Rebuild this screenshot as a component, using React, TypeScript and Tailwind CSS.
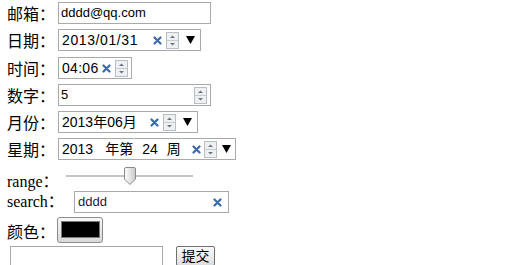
import React from 'react';

const cjk = "font-['Noto_Sans_CJK_SC',sans-serif]";
const field = "font-['Liberation_Sans','Noto_Sans_CJK_SC',sans-serif]";
const latinLabel = "font-['Liberation_Serif','Noto_Sans_CJK_SC',serif]";

const ClearX = () => (
  <svg width="9" height="9" viewBox="0 0 9 9" className="shrink-0">
    <path d="M1.5 1.5 L7.5 7.5 M7.5 1.5 L1.5 7.5" stroke="#3a6aa8" strokeWidth="2.2" strokeLinecap="round" />
  </svg>
);

const Spin = () => (
  <svg width="13" height="17" viewBox="0 0 13 17" className="shrink-0">
    <rect x="0.5" y="0.5" width="12" height="16" fill="#eef0f2" stroke="#b9bec4" />
    <line x1="1" y1="8.5" x2="12" y2="8.5" stroke="#c8ccd0" />
    <path d="M4 6 L6.5 3.5 L9 6 Z" fill="#6b7785" />
    <path d="M4 11 L6.5 13.5 L9 11 Z" fill="#6b7785" />
  </svg>
);

const Drop = () => (
  <svg width="9" height="8" viewBox="0 0 9 8" className="shrink-0">
    <path d="M0 0 H9 L4.5 8 Z" fill="#000" />
  </svg>
);

// trailing controls of the date-like inputs
const DateTail = ({ tight = false }: { tight?: boolean }) => (
  <div className="flex items-center">
    <ClearX />
    <div className={tight ? 'ml-[3px]' : 'ml-[4px]'}><Spin /></div>
    <div className={tight ? 'ml-[5px]' : 'ml-[7px]'}><Drop /></div>
  </div>
);

const Label = ({ children, w = 'w-[51px]' }: { children: React.ReactNode; w?: string }) => (
  <span className={`${cjk} ${w} text-[16px] leading-[22px] text-black shrink-0`}>{children}</span>
);

const App: React.FC = () => {
  return (
    <div className="w-[511px] h-[265px] overflow-hidden bg-white pl-[7px] pt-[2px]">
      {/* 邮箱 */}
      <div className="flex items-center h-[22px]">
        <Label>邮箱：</Label>
        <div className={`${field} w-[153px] h-[22px] border border-[#a9a9a9] pl-[2px] text-[13px] leading-[20px] text-black`}>
          dddd@qq.com
        </div>
      </div>

      {/* 日期 */}
      <div className="flex items-center h-[22px] mt-[5px]">
        <Label>日期：</Label>
        <div className={`${field} w-[143px] h-[22px] border border-[#a9a9a9] pl-[3px] pr-[5px] flex items-center text-[14px] text-black`}>
          <span className="flex-1 tracking-[0.6px]">2013/01/31</span>
          <DateTail />
        </div>
      </div>

      {/* 时间 */}
      <div className="flex items-center h-[22px] mt-[6px]">
        <Label>时间：</Label>
        <div className={`${field} w-[74px] h-[22px] border border-[#a9a9a9] pl-[3px] pr-[3px] flex items-center text-[14px] text-black`}>
          <span className="flex-1 tracking-[0.3px]">04:06</span>
          <ClearX />
          <div className="ml-[4px]"><Spin /></div>
        </div>
      </div>

      {/* 数字 */}
      <div className="flex items-center h-[22px] mt-[5px]">
        <Label>数字：</Label>
        <div className={`${field} w-[153px] h-[22px] border border-[#a9a9a9] pl-[2px] pr-[3px] flex items-center text-[13px] text-black`}>
          <span className="flex-1">5</span>
          <Spin />
        </div>
      </div>

      {/* 月份 */}
      <div className="flex items-center h-[22px] mt-[5px]">
        <Label>月份：</Label>
        <div className={`${field} w-[140px] h-[22px] border border-[#a9a9a9] pl-[3px] pr-[5px] flex items-center text-[14px] text-black`}>
          <span className="flex-1">2013年06月</span>
          <DateTail />
        </div>
      </div>

      {/* 星期 */}
      <div className="flex items-center h-[22px] mt-[5px]">
        <Label>星期：</Label>
        <div className={`${field} w-[178px] h-[22px] border border-[#a9a9a9] pl-[3px] pr-[4px] flex items-center text-[14px] text-black`}>
          <span className="flex-1 whitespace-nowrap">
            2013<span className="ml-[12px]">年第</span><span className="ml-[9px]">24</span><span className="ml-[9px]">周</span>
          </span>
          <DateTail tight />
        </div>
      </div>

      {/* range */}
      <div className="flex items-end h-[27px] mt-[3px]">
        <span className={`${latinLabel} w-[55px] text-[16px] leading-[16px] text-black shrink-0`}>range：</span>
        <div className="self-start mt-[4px] relative w-[135px] h-[18px] flex items-center">
          <div className="mx-[4px] flex-1 h-[2px] bg-[#c4c4c4]" />
          <svg width="12" height="18" viewBox="0 0 12 18" className="absolute left-[62px] top-0">
            <defs>
              <linearGradient id="thumb" x1="0" y1="0" x2="1" y2="0">
                <stop offset="0" stopColor="#ffffff" />
                <stop offset="1" stopColor="#c9c9c9" />
              </linearGradient>
            </defs>
            <path d="M2 0.5 H10 Q11.5 0.5 11.5 2 V12 L6 17.5 L0.5 12 V2 Q0.5 0.5 2 0.5 Z" fill="url(#thumb)" stroke="#8a8a8a" />
          </svg>
        </div>
      </div>

      {/* search */}
      <div className="flex items-center h-[22px] mt-[1px]">
        <span className={`${latinLabel} w-[67px] text-[16px] leading-[22px] text-black shrink-0`}>search：</span>
        <div className={`${field} w-[155px] h-[22px] border border-[#a9a9a9] pl-[3px] pr-[6px] flex items-center text-[13px] text-[#1c1c3c]`}>
          <span className="flex-1">dddd</span>
          <ClearX />
        </div>
      </div>

      {/* 颜色 */}
      <div className="flex items-center h-[26px] mt-[4px]">
        <span className={`${cjk} w-[50px] text-[16px] leading-[22px] text-black shrink-0 mt-[2px]`}>颜色：</span>
        <div className="w-[46px] h-[26px] rounded-[3px] border border-[#8c8c8c] bg-gradient-to-b from-[#f7f7f7] to-[#d9d9d9] pl-[3px] pr-[2px] pt-[3px] pb-[4px]">
          <div className="w-full h-full bg-black border border-[#7a7a7a]" />
        </div>
      </div>

      {/* textarea + 提交 */}
      <div className="flex items-start mt-[3px] pl-[3px]">
        <div className="w-[153px] h-[36px] border border-[#a9a9a9] bg-white" />
        <div className={`${cjk} ml-[13px] w-[39px] h-[20px] rounded-[2px] border border-[#707070] bg-gradient-to-b from-[#fbfbfb] to-[#dedede] flex items-start justify-center text-[14px] leading-[15px] pt-[1px] text-black`}>
          提交
        </div>
      </div>
    </div>
  );
};

export default App;
